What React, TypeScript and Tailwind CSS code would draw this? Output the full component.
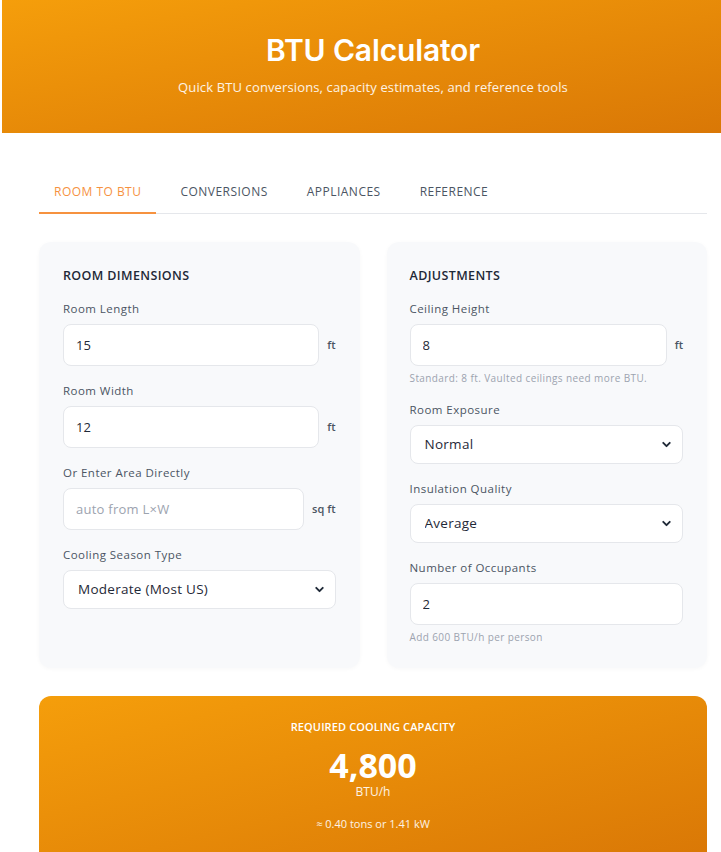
import { ChevronDown } from "lucide-react";

const body = { fontFamily: '"Open Sans", "Noto Sans", sans-serif' };

function Label({ children }: { children: React.ReactNode }) {
  return <div className="mb-[7px] text-[11.5px] font-medium leading-4 tracking-[0.04em] text-[#4b5563]">{children}</div>;
}

function Field({ label, value, unit, placeholder, hint, full }: { label: string; value?: string; unit?: string; placeholder?: string; hint?: string; full?: boolean }) {
  return (
    <div>
      <Label>{label}</Label>
      <div className="flex items-center gap-2">
        <input
          readOnly
          defaultValue={value}
          placeholder={placeholder}
          className={`h-[42px] rounded-lg border border-[#e5e7eb] bg-white px-3 text-[13px] text-[#1f2937] outline-none placeholder:text-[#9ca3af] placeholder:tracking-[0.02em] ${full ? "w-full" : "min-w-0 flex-1"}`}
        />
        {unit && <span className="text-[11px] font-semibold text-[#4b5563]">{unit}</span>}
      </div>
      {hint && <div className="mt-[6px] text-[10px] leading-[13px] tracking-[0.04em] text-[#9ca3af]">{hint}</div>}
    </div>
  );
}

function Select({ label, value }: { label: string; value: string }) {
  return (
    <div>
      <Label>{label}</Label>
      <div className="relative">
        <select
          defaultValue={value}
          className="h-[39px] w-full appearance-none rounded-lg border border-[#e5e7eb] bg-white px-[14px] text-[13.5px] tracking-[0.02em] text-[#1f2937] outline-none"
        >
          <option>{value}</option>
        </select>
        <ChevronDown size={13} strokeWidth={3.5} className="pointer-events-none absolute right-[10px] top-[13px] text-[#1f2937]" />
      </div>
    </div>
  );
}

export default function App() {
  const tabs = ["ROOM TO BTU", "CONVERSIONS", "APPLIANCES", "REFERENCE"];

  return (
    <div className="w-[721px] overflow-hidden bg-white" style={body}>
      <div className="ml-[2px] w-[742px]">
        <header className="flex h-[133px] flex-col items-center bg-linear-to-br from-[#f59e0b] to-[#d97706] pt-[32px] text-white">
          <h1 className="text-[30px] font-semibold leading-9 tracking-[-0.005em]" style={{ fontFamily: "Inter, sans-serif" }}>BTU Calculator</h1>
          <p className="mt-[10px] text-[13px] tracking-[0.01em] text-white/90">Quick BTU conversions, capacity estimates, and reference tools</p>
        </header>

        <main className="px-[37px] pt-[35px]">
          <div className="flex gap-[9px] border-b border-[#e5e7eb]">
            {tabs.map((t, i) => (
              <div
                key={t}
                className={`px-[15px] pb-[10px] pt-[14px] text-[12px] font-medium leading-5 tracking-[0.04em] ${i === 0 ? "-mb-px border-b-2 border-[#f6923f] text-[#f6923f]" : "text-[#4b5563]"}`}
              >
                {t}
              </div>
            ))}
          </div>

          <div className="mt-7 grid grid-cols-2 gap-[27px]">
            <section className="flex flex-col gap-[17px] rounded-xl bg-[#f8f9fb] p-6 shadow-[0_1px_4px_rgba(0,0,0,0.03)]">
              <h2 className="-mb-[2px] text-[12.5px] font-semibold leading-5 tracking-[0.03em] text-[#1f2937]">ROOM DIMENSIONS</h2>
              <Field label="Room Length" value="15" unit="ft" />
              <Field label="Room Width" value="12" unit="ft" />
              <Field label="Or Enter Area Directly" placeholder="auto from L×W" unit="sq ft" />
              <Select label="Cooling Season Type" value="Moderate (Most US)" />
            </section>

            <section className="flex flex-col gap-[17px] rounded-xl bg-[#f8f9fb] py-6 pl-[23px] pr-6 shadow-[0_1px_4px_rgba(0,0,0,0.03)]">
              <h2 className="-mb-[2px] text-[12.5px] font-semibold leading-5 tracking-[0.03em] text-[#1f2937]">ADJUSTMENTS</h2>
              <Field label="Ceiling Height" value="8" unit="ft" hint="Standard: 8 ft. Vaulted ceilings need more BTU." />
              <Select label="Room Exposure" value="Normal" />
              <Select label="Insulation Quality" value="Average" />
              <Field label="Number of Occupants" value="2" full hint="Add 600 BTU/h per person" />
            </section>
          </div>

          <div className="mt-7 flex flex-col items-center rounded-xl bg-linear-to-br from-[#f59e0b] to-[#d97706] pb-8 pt-[23px] text-white">
            <div className="text-[11px] font-semibold leading-4 tracking-[0.01em]">REQUIRED COOLING CAPACITY</div>
            <div className="mt-[11px] text-[34px] font-bold leading-[38px]">4,800</div>
            <div className="text-[12px] leading-4 text-white/90">BTU/h</div>
            <div className="mt-[16px] text-[11px] leading-4 text-white/90">≈ 0.40 tons or 1.41 kW</div>
          </div>
        </main>
      </div>
    </div>
  );
}
